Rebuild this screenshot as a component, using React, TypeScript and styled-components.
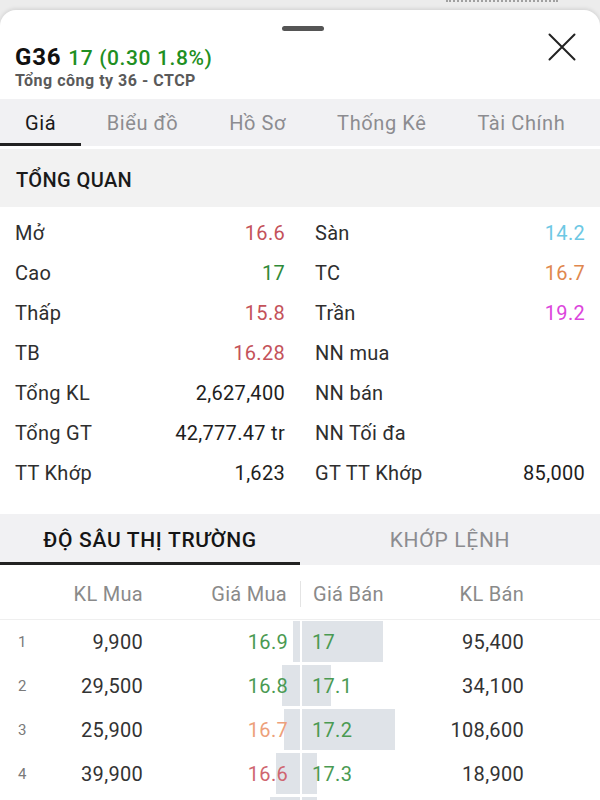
import React from "react";
import styled, { createGlobalStyle } from "styled-components";

const GlobalStyle = createGlobalStyle`
  html, body {
    margin: 0;
    padding: 0;
    background: #ececec;
    overflow: hidden;
    font-family: Roboto, "Noto Sans", Arial, sans-serif;
  }
  * { box-sizing: border-box; }
`;

const C = {
  text: "#2e2e2e",
  green: "#2f8a38",
  titleGreen: "#1f8f22",
  red: "#c4525a",
  orange: "#e0874e",
  cyan: "#6dc8e4",
  magenta: "#dc45dc",
  dGreen: "#4a9a52",
  dOrange: "#eda07a",
  dRed: "#cf6670",
  bar: "#dfe3e8",
  panel: "#f1f1f3",
};

const Page = styled.div`
  background: #ececec;
  width: 600px;
  height: 800px;
`;

const TopStrip = styled.div`
  height: 10px;
  display: flex;
  justify-content: flex-end;
  padding-right: 42px;
`;

const Dotted = styled.div`
  width: 112px;
  height: 2px;
  border-top: 2px dotted #a0a0a0;
`;

const Sheet = styled.div`
  background: #fff;
  border-radius: 16px 16px 0 0;
  box-shadow: 0 -1px 4px rgba(0, 0, 0, 0.12);
  height: 790px;
  overflow: hidden;
`;

const Handle = styled.div`
  width: 42px;
  height: 5px;
  border-radius: 3px;
  background: #555;
  margin: 16px 0 0 282px;
`;

const HeaderRow = styled.div`
  display: flex;
  justify-content: space-between;
  align-items: flex-start;
  padding: 12px 24px 8px 15px;
`;

const TitleLine = styled.div`
  line-height: 28px;
  height: 28px;
  display: flex;
  align-items: baseline;
  gap: 7px;
`;

const Ticker = styled.span`
  font-size: 24px;
  font-weight: 700;
  color: #111;
  letter-spacing: 0.8px;
`;

const Change = styled.span`
  font-size: 21px;
  font-weight: 500;
  color: ${C.titleGreen};
  letter-spacing: 0.6px;
`;

const Company = styled.div`
  font-size: 16px;
  font-weight: 700;
  color: #5a5a5a;
  line-height: 20px;
  letter-spacing: 0.5px;
`;

const CloseBtn = styled.button`
  border: 0;
  background: none;
  padding: 0;
  width: 28px;
  height: 28px;
  margin-top: -10px;
  display: flex;
`;

const TabBar = styled.div`
  display: flex;
  height: 47px;
  background: ${C.panel};
`;

const Tab = styled.div<{ $active?: boolean }>`
  position: relative;
  display: flex;
  align-items: center;
  padding: 0 ${(p) => (p.$active ? "25px" : "25.5px")};
  font-size: 20px;
  letter-spacing: 0.6px;
  color: ${(p) => (p.$active ? "#1a1a1a" : "#8c8c90")};
  &::after {
    content: "";
    display: ${(p) => (p.$active ? "block" : "none")};
    position: absolute;
    left: 0;
    right: 0;
    bottom: 0;
    height: 3px;
    background: #222;
  }
`;

const SectionHeader = styled.div`
  margin-top: 3px;
  height: 58px;
  background: #f2f2f2;
  display: flex;
  align-items: center;
  padding: 4px 16px 0;
  font-size: 20px;
  font-weight: 500;
  color: #1a1a1a;
  letter-spacing: 0.4px;
`;

const Overview = styled.div`
  display: grid;
  grid-template-columns: 1fr 1fr;
  column-gap: 30px;
  padding: 6px 15px 0;
`;

const Stat = styled.div`
  height: 40px;
  display: flex;
  align-items: center;
  justify-content: space-between;
  font-size: 20px;
  letter-spacing: 0.3px;
`;

const StatLabel = styled.span`
  color: ${C.text};
`;

const StatValue = styled.span<{ $color?: string }>`
  color: ${(p) => p.$color || "#1e1e1e"};
`;

const DepthTabs = styled.div`
  margin-top: 21px;
  display: grid;
  grid-template-columns: 1fr 1fr;
  height: 51px;
  background: ${C.panel};
`;

const DepthTab = styled.div<{ $active?: boolean }>`
  position: relative;
  display: flex;
  align-items: center;
  justify-content: center;
  font-size: 21px;
  font-weight: ${(p) => (p.$active ? 500 : 400)};
  letter-spacing: 0.7px;
  color: ${(p) => (p.$active ? "#151515" : "#8c8c90")};
  &::after {
    content: "";
    display: ${(p) => (p.$active ? "block" : "none")};
    position: absolute;
    left: 0;
    right: 0;
    bottom: 0;
    height: 3px;
    background: #222;
  }
`;

const cols = "40px 103px 157px 120px 104px 1fr";

const HeadRow = styled.div`
  display: grid;
  grid-template-columns: ${cols};
  height: 55px;
  padding-top: 4px;
  align-items: center;
  border-bottom: 1px solid #efefef;
  font-size: 20px;
  letter-spacing: 0.3px;
  color: #8a8a8a;
`;

const HeadCell = styled.div<{ $align?: "left" | "right"; $sep?: boolean; $shift?: number }>`
  text-align: ${(p) => p.$align || "right"};
  padding-left: ${(p) => (p.$align === "left" ? "12px" : "0")};
  padding-right: ${(p) => (p.$align === "left" ? "0" : `${p.$shift ?? 0}px`)};
  border-left: ${(p) => (p.$sep ? "1px solid #e4e4e4" : "none")};
  line-height: 26px;
`;

const BookRow = styled.div`
  display: grid;
  grid-template-columns: ${cols};
  height: 44px;
  align-items: center;
  font-size: 20px;
  letter-spacing: 0.3px;
  color: #333;
`;

const Rank = styled.div`
  padding-left: 18px;
  font-size: 15px;
  color: #7a7a7a;
`;

const Num = styled.div`
  text-align: right;
`;

const PriceCell = styled.div<{ $side: "buy" | "sell"; $color: string }>`
  position: relative;
  height: 100%;
  display: flex;
  align-items: center;
  justify-content: ${(p) => (p.$side === "buy" ? "flex-end" : "flex-start")};
  padding: ${(p) => (p.$side === "buy" ? "0 12px 0 0" : "0 0 0 12px")};
  color: ${(p) => p.$color};
`;

const Bar = styled.div<{ $side: "buy" | "sell" }>`
  position: absolute;
  top: 1px;
  bottom: 2px;
  ${(p) => (p.$side === "buy" ? "right: 0;" : "left: 2px;")}
  background: ${C.bar};
`;

const PriceText = styled.span`
  position: relative;
`;

const stats: [string, string, string?][] = [
  ["Mở", "16.6", C.red],
  ["Sàn", "14.2", C.cyan],
  ["Cao", "17", C.green],
  ["TC", "16.7", C.orange],
  ["Thấp", "15.8", C.red],
  ["Trần", "19.2", C.magenta],
  ["TB", "16.28", C.red],
  ["NN mua", ""],
  ["Tổng KL", "2,627,400"],
  ["NN bán", ""],
  ["Tổng GT", "42,777.47 tr"],
  ["NN Tối đa", ""],
  ["TT Khớp", "1,623"],
  ["GT TT Khớp", "85,000"],
];

// The fifth level is only visible as the top edge of its depth bars.
const book = [
  { kl: "9,900", gm: "16.9", gmc: C.dGreen, gb: "17", klb: "95,400", bw: 7, sw: 81 },
  { kl: "29,500", gm: "16.8", gmc: C.dGreen, gb: "17.1", klb: "34,100", bw: 18, sw: 29 },
  { kl: "25,900", gm: "16.7", gmc: C.dOrange, gb: "17.2", klb: "108,600", bw: 16, sw: 93 },
  { kl: "39,900", gm: "16.6", gmc: C.dRed, gb: "17.3", klb: "18,900", bw: 24, sw: 15 },
  { kl: "", gm: "", gmc: C.dRed, gb: "", klb: "", bw: 30, sw: 15 },
];

const tabs = ["Giá", "Biểu đồ", "Hồ Sơ", "Thống Kê", "Tài Chính"];

export default function App() {
  return (
    <>
      <GlobalStyle />
      <Page>
        <TopStrip>
          <Dotted />
        </TopStrip>
        <Sheet>
          <Handle />
          <HeaderRow>
            <div>
              <TitleLine>
                <Ticker>G36</Ticker>
                <Change>17 (0.30 1.8%)</Change>
              </TitleLine>
              <Company>Tổng công ty 36 - CTCP</Company>
            </div>
            <CloseBtn aria-label="Đóng">
              <svg width="28" height="28" viewBox="0 0 28 28">
                <path d="M1.5 1.5 L26.5 26.5 M26.5 1.5 L1.5 26.5" stroke="#222" strokeWidth="2" strokeLinecap="round" />
              </svg>
            </CloseBtn>
          </HeaderRow>
          <TabBar>
            {tabs.map((t, i) => (
              <Tab key={t} $active={i === 0}>
                {t}
              </Tab>
            ))}
          </TabBar>
          <SectionHeader>TỔNG QUAN</SectionHeader>
          <Overview>
            {stats.map(([label, value, color]) => (
              <Stat key={label}>
                <StatLabel>{label}</StatLabel>
                <StatValue $color={color}>{value}</StatValue>
              </Stat>
            ))}
          </Overview>
          <DepthTabs>
            <DepthTab $active>ĐỘ SÂU THỊ TRƯỜNG</DepthTab>
            <DepthTab>KHỚP LỆNH</DepthTab>
          </DepthTabs>
          <HeadRow>
            <div />
            <HeadCell $shift={-6}>KL Mua</HeadCell>
            <HeadCell $shift={13}>Giá Mua</HeadCell>
            <HeadCell $align="left" $sep>
              Giá Bán
            </HeadCell>
            <HeadCell>KL Bán</HeadCell>
            <div />
          </HeadRow>
          {book.map((r, i) => (
            <BookRow key={i}>
              <Rank>{r.kl ? i + 1 : ""}</Rank>
              <Num>{r.kl}</Num>
              <PriceCell $side="buy" $color={r.gmc}>
                <Bar $side="buy" style={{ width: r.bw }} />
                <PriceText>{r.gm}</PriceText>
              </PriceCell>
              <PriceCell $side="sell" $color={C.dGreen}>
                <Bar $side="sell" style={{ width: r.sw }} />
                <PriceText>{r.gb}</PriceText>
              </PriceCell>
              <Num>{r.klb}</Num>
              <div />
            </BookRow>
          ))}
        </Sheet>
      </Page>
    </>
  );
}
